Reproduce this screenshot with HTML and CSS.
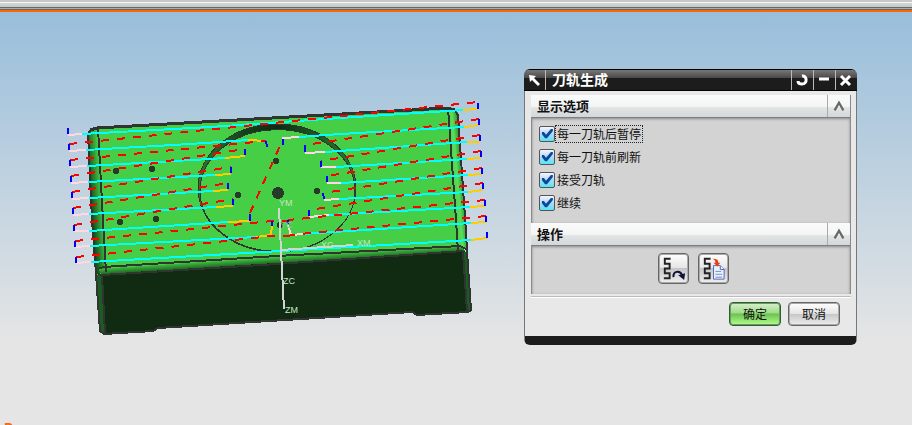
FILE: index.html
```html
<!DOCTYPE html>
<html lang="zh-CN">
<head>
<meta charset="utf-8">
<title>刀轨生成</title>
<link rel="stylesheet" href="styles.css">
</head>
<body>
<div class="toolbar-edge"></div>
<main class="viewport">
  <svg class="model" aria-hidden="true">
    <defs>
      <linearGradient id="leftEdge" gradientUnits="userSpaceOnUse" x1="91" y1="200" x2="103" y2="199">
        <stop offset="0" stop-color="#145018"/><stop offset=".7" stop-color="#39ab3a"/><stop offset="1" stop-color="#46cf46"/>
      </linearGradient>
      <linearGradient id="rightEdge" gradientUnits="userSpaceOnUse" x1="452" y1="180" x2="464" y2="179">
        <stop offset="0" stop-color="#46cf46"/><stop offset=".45" stop-color="#5ade58"/><stop offset="1" stop-color="#23812a"/>
      </linearGradient>
      <linearGradient id="lowEdge" gradientUnits="userSpaceOnUse" x1="277" y1="256" x2="277.5" y2="264">
        <stop offset="0" stop-color="#46cf46"/><stop offset="1" stop-color="#1a5e1e"/>
      </linearGradient>
      <linearGradient id="boss" x1="0" y1="0" x2="1" y2="0">
        <stop offset="0" stop-color="#2a7a2c"/><stop offset=".3" stop-color="#15401a"/><stop offset=".5" stop-color="#102a12"/><stop offset=".75" stop-color="#1c5a20"/><stop offset="1" stop-color="#2a7a2c"/>
      </linearGradient>
    </defs>
    <g class="solid">
      <path fill="#46cf46" d="M88 133l3-4 7-2 349-20 8 1 3 5 9 135-371 27z"/>
      <path fill="url(#leftEdge)" d="M88 133l3-4 7-1 8 144-10 2z"/>
      <path fill="url(#rightEdge)" d="M448 107l7 1 3 5 9 135-9 2z"/>
      <path fill="url(#lowEdge)" d="M98 269l179-12 183-11 6 5-364 24z"/>
      <path fill="#102b11" d="M96 275l6-1 361-23 4 1 4 58-3 2-51 3-5-3-254 16-5 3-49 3-4-2z"/>
      <path fill="#1b5c20" d="M96 275h6l3 58-4-1zM463 252h4l4 58-4 1z"/>
    </g>
    <g class="edge">
      <path class="heavy" d="M90 130l7-2 350-20 8 2"/>
      <path d="M88 133l3-3M88 133l4 87 4 54 4 57 4 3 49-3 5-3 254-16 5 3 51-3 3-2-4-58-1-20-8-117-4-5"/>
      <path d="M98 128l5 92 3 52M448 108l8 112 2 31M98 269l5-2 174-11 183-10 6 3M98 274l4 1 175-11 186-13M102 275l3 58M463 252l4 59"/>
    </g>
    <path fill="url(#boss)" fill-rule="evenodd" stroke="#303532" stroke-width="1" d="M198 188a79 64 0 0 1 158 0a79 64 0 0 1-158 0zM200 191a77 60 0 0 0 155 0a77 61 0 0 0-155 0z"/>
    <g class="holes">
      <circle cx="116" cy="171" r="3"/><circle cx="152" cy="169" r="3"/><circle cx="120" cy="222" r="3"/><circle cx="156" cy="219" r="3"/>
      <circle cx="276" cy="161" r="3"/><circle cx="238" cy="195" r="3"/><circle cx="317" cy="191" r="3"/><circle cx="280" cy="225" r="3"/>
      <circle cx="278" cy="193" r="6"/>
    </g>
    <g class="path cut">
      <path d="M82 134l128-7 130-9 123-8"/>
      <path d="M86 150l104-6 58-4M299 137l41-3 124-7"/>
      <path d="M87 166l123-7 15-1M325 152l142-10"/>
      <path d="M88 182l127-7M336 167l131-8"/>
      <path d="M89 198l124-7M341 183l127-8"/>
      <path d="M89 214l127-7M339 199l129-7"/>
      <path d="M89 231l139-9M329 215l141-8"/>
      <path d="M90 246l166-9M303 234l168-11"/>
      <path d="M91 262l380-22"/>
    </g>
    <g class="path engage">
      <path d="M68 135l14-1M69 151l17-1M70 167l17-1M71 183l17-1M72 199l17-1M73 215l16-1M74 231h15M75 247l15-1M76 263l15-1"/>
      <path d="M283 143v-5l16-1M305 153l20-1M321 167h15M327 183h14M324 200l15-1M309 217l20-2M288 225l3 10 12-1"/>
    </g>
    <g class="path retract">
      <path d="M463 110l15-1M464 127l15-2M467 142h13M467 159l14-1M468 175l14-1M468 192l15-2M470 207l15-1M471 223l15-1M471 240l16-2"/>
      <path d="M248 140l18 1M225 158l20-2M215 175l16-1M213 191l15-1M216 207l17-1M228 222l22-1M256 237l15-2 1-9"/>
    </g>
    <g class="path rapid">
      <path d="M69 144L478 102M70 160l196-19M71 176l174-27M72 192l159-25M73 208l155-25M74 225l159-26M75 241l197-20h16M76 257l196-21h18"/>
      <path d="M479 119l-174 26M480 135l-159 26M481 151l-154 25M482 168l-158 25M483 183l-174 27M485 200l-197 20M486 216l-196 19M250 213l33-74"/>
    </g>
    <g class="path lift">
      <path d="M68 128v6M69 144v6M70 160v6M71 176v6M72 192v6M73 208v6M74 225v6M75 241v6M76 257v6"/>
      <path d="M478 103v6M479 119v6M480 135v6M481 151v6M482 168v6M483 183v6M485 200v6M486 216v6M487 232v6"/>
      <path d="M266 141l1 6M245 149v6M231 167v6M228 183v6M233 199v6M250 214v7M272 221v5M283 139v6M305 145v7M321 161v6M327 176v6M323 193l1 6M309 210v6M288 220v4"/>
    </g>
    <g class="axes">
      <path d="M279 208l2 43 3 58M281 250l72-5"/>
      <text x="279" y="206">YM</text><text x="321" y="248">XC</text><text x="357" y="246">XM</text>
      <text x="280" y="228" class="dim">YC</text><text x="283" y="284">ZC</text><text x="285" y="313">ZM</text>
    </g>
  </svg>

  <form class="dialog">
    <header class="titlebar">
      <svg class="pointer" viewBox="0 0 20 20" aria-hidden="true"><path d="M4 5l7 1-2 2 6 6-2 2-6-6-2 2z"/></svg>
      <h1>刀轨生成</h1>
      <button type="button" aria-label="重置"><svg viewBox="0 0 20 20"><path d="M10 6c5-1 6 8 0 8-3 0-4-1-4-3"/></svg></button>
      <button type="button" aria-label="最小化"><svg viewBox="0 0 20 20"><path d="M5 9h10"/></svg></button>
      <button type="button" aria-label="关闭"><svg viewBox="0 0 20 20"><path d="M5 6l9 9M14 6l-9 9"/></svg></button>
    </header>
    <div class="content">
      <section>
        <div class="group-head"><h2>显示选项</h2><button type="button" aria-label="折叠显示选项"><svg viewBox="0 0 20 20"><path d="M6 14l4-7 4 7"/></svg></button></div>
        <div class="panel options">
          <label class="focused"><input type="checkbox" checked><span>每一刀轨后暂停</span></label>
          <label><input type="checkbox" checked><span>每一刀轨前刷新</span></label>
          <label><input type="checkbox" checked><span>接受刀轨</span></label>
          <label><input type="checkbox" checked><span>继续</span></label>
        </div>
      </section>
      <section>
        <div class="group-head"><h2>操作</h2><button type="button" aria-label="折叠操作"><svg viewBox="0 0 20 20"><path d="M6 14l4-7 4 7"/></svg></button></div>
        <div class="panel actions">
          <button type="button" aria-label="重播刀轨">
            <svg viewBox="0 0 30 30"><path class="track" d="M12 5H6v5h5v5H6v5h5v5H5"/><path class="replay" d="M15 24c-1-7 7-7 9-2"/><path class="tip" d="M20 22l7-2-1 7z"/></svg>
          </button>
          <button type="button" aria-label="列出刀轨">
            <svg viewBox="0 0 30 30"><path class="track" d="M12 5H6v5h5v5H6v5h5v5H5"/><path class="sheet" d="M15 12h7l4 4v10H15z"/><path class="sheet" d="M22 12v4h4"/><path class="rows" d="M17 18h6M17 21h7M17 24h7"/><path class="arrow" d="M14 5c4 0 6 1 6 4h2l-3 4-4-4h2c0-2-1-3-3-4z"/></svg>
          </button>
        </div>
      </section>
      <footer><button type="submit" class="primary">确定</button><button type="button">取消</button></footer>
    </div>
  </form>
  <div class="status">nP</div>
</main>
</body>
</html>
```
FILE: styles.css
```css
* { box-sizing: border-box; }
body {
  margin: 0;
  min-height: 100vh;
  display: flex;
  flex-direction: column;
  font: 12px/18px "Noto Sans CJK SC", sans-serif;
  color: #111;
}
h1, h2 { margin: 0; }
button { padding: 0; font: inherit; color: inherit; }
svg { display: block; }

.toolbar-edge {
  height: 11px;
  background: linear-gradient(#c8c8c8 2px, #f5f5f5 2px 3px, #d6d6d6 3px, #c8c8c8 7px, #666 7px 8px, #aaa 8px 9px, #666 9px 10px, #ff6500 10px);
}
.viewport {
  position: relative;
  flex: 1;
  overflow: hidden;
  background: linear-gradient(#98bedb, #e5e5e5 80%);
}
.viewport::before { content: ""; display: block; height: 1px; background: #ff6500; }

/* Model canvas: drawing coordinates start at the window's top edge. */
.model { position: absolute; top: -11px; left: 0; width: 100%; height: calc(100% + 11px); shape-rendering: crispEdges; }
.edge { fill: none; stroke: #303532; stroke-width: 2; }
.edge .heavy { stroke-width: 3; }
.holes { fill: #263a28; }
.path { fill: none; stroke-width: 2; }
.cut { stroke: #0ff; }
.engage { stroke: #ffd8e4; }
.retract { stroke: #fc0; }
.rapid { stroke: #f00; stroke-dasharray: 8 8; }
.lift { stroke: #00f; }
.axes { fill: none; stroke: #d0d6d0; stroke-width: 2; }
.axes text { stroke: none; fill: #c4e6c4; font: 9px "Liberation Sans", sans-serif; }
.axes .dim { fill: #8cc88c; }

.dialog {
  position: absolute;
  top: 58px;
  left: 524px;
  width: 333px;
  border: 1px solid #777;
  border-top-color: #000;
  border-bottom: 9px solid #1c1c1c;
  border-radius: 6px;
  background: #e8e8e8;
}
.titlebar {
  display: flex;
  height: 21px;
  margin: 0 -1px;
  border-radius: 5px 5px 0 0;
  background: linear-gradient(#777, #484848 8px, #1c1c1c 8px);
  border-bottom: 1px solid #000;
  color: #fff;
}
.titlebar h1 { flex: 1; padding-left: 6px; border-left: 1px solid #bbb; font-size: 14px; line-height: 19px; }
.titlebar svg { width: 20px; height: 20px; }
.pointer { margin-left: 1px; fill: #fff; }
.titlebar button { width: 22px; border: 0; border-left: 1px solid #bbb; background: none; }
.titlebar button path { fill: none; stroke: #fff; stroke-width: 3; }

.content { padding: 4px 5px 10px 6px; }
.group-head {
  display: flex;
  height: 23px;
  border-bottom: 1px solid #7c8082;
  border-right: 1px solid #888;
  background: linear-gradient(#fafafa, #f3f4f4 12px, #e3e5e6 12px, #d4d7d9);
}
.group-head h2 { flex: 1; padding-left: 6px; font-size: 13px; line-height: 22px; }
.group-head button { width: 23px; border: 0; border-left: 1px solid #aaa; background: none; }
.group-head button svg { width: 22px; height: 22px; }
.group-head button path { fill: none; stroke: #666; stroke-width: 2; }
.panel { background: #d3d3d3; border: 1px solid #8b8b8b; border-width: 0 1px; box-shadow: inset 0 1px 3px #888; }
.options { display: grid; gap: 5px; padding: 7px 7px 11px; justify-items: start; }
.options label { display: flex; align-items: center; height: 18px; }
.options span { padding: 0 1px; border: 1px dotted transparent; height: 18px; line-height: 16px; }
.options .focused span { border-color: #222; }
.options input {
  appearance: none;
  width: 16px;
  height: 16px;
  margin: 0;
  border: 1px solid #555;
  border-radius: 2px;
  background: linear-gradient(#f4f6ff, #b8d4f4 50%, #50e8f8);
}
.options input:checked::before {
  content: "";
  display: block;
  height: 14px;
  background: #064a9c;
  clip-path: polygon(14% 36%, 28% 36%, 43% 56%, 78% 14%, 92% 14%, 92% 28%, 50% 80%, 36% 80%, 14% 52%);
}
.actions { display: flex; justify-content: center; gap: 9px; height: 48px; padding-top: 7px; padding-left: 4px; }
.actions button, footer button {
  border: 1px solid #666;
  border-radius: 4px;
  background: linear-gradient(#fff, #e4e4e4 50%, #c4c6c8 50%, #eee);
  box-shadow: inset 0 0 0 1px #aaa;
}
.actions button { width: 31px; height: 31px; }
.actions svg { width: 29px; height: 29px; }
.track { fill: none; stroke: #222; stroke-width: 2; }
.replay { fill: none; stroke: #113; stroke-width: 2; }
.tip { fill: #113; }
.sheet { fill: #e8f0ff; stroke: #5468b8; }
.rows { stroke: #7890b0; }
.arrow { fill: #e8400c; }
footer { display: flex; justify-content: flex-end; gap: 7px; margin-top: 2px; padding: 5px 11px 0 0; border-top: 1px solid #bbb; box-shadow: inset 0 1px #fff; }
footer button { width: 52px; height: 24px; line-height: 20px; }
footer .primary { border-color: #2d6030; background: linear-gradient(#d8f0d0, #a0dc88 45%, #68c450 50%, #b8fc90); box-shadow: inset 0 0 0 1px #6a9a60; }

.status { position: absolute; left: -5px; bottom: 0; height: 4px; overflow: hidden; color: #ff6500; font: bold 15px/17px "Liberation Mono", monospace; }
```
